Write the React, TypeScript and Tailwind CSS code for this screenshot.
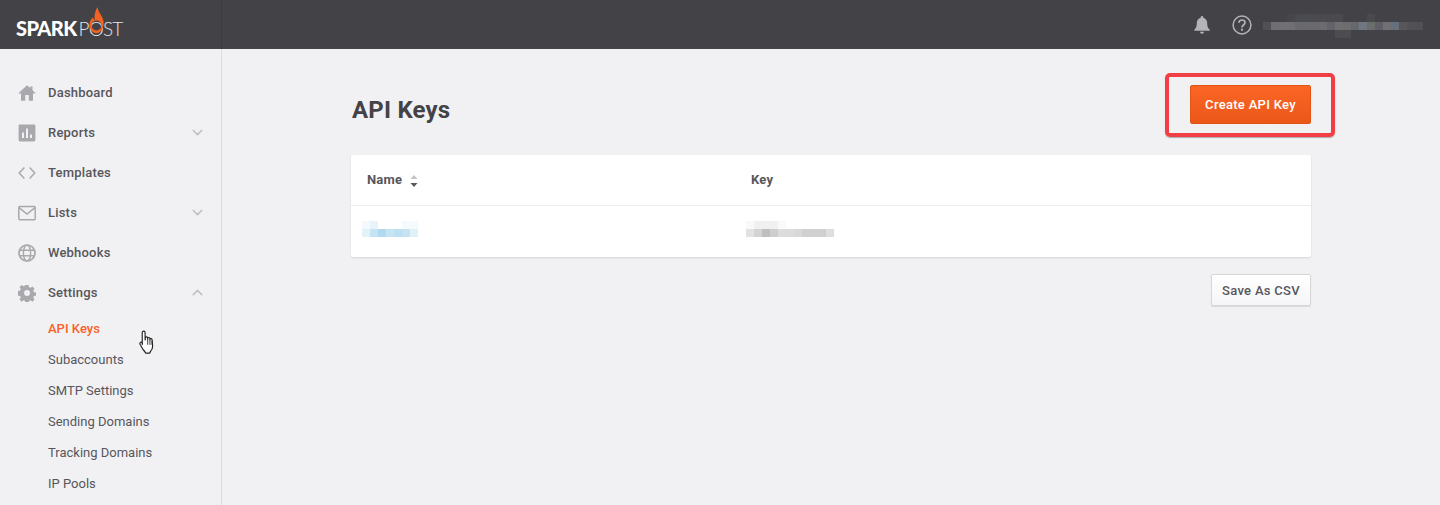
import { ChevronDown, ChevronUp } from 'lucide-react'

const navItems = [
  { label: 'Dashboard', icon: 'home' },
  { label: 'Reports', icon: 'chart', chevron: 'down' },
  { label: 'Templates', icon: 'code' },
  { label: 'Lists', icon: 'mail', chevron: 'down' },
  { label: 'Webhooks', icon: 'globe' },
  { label: 'Settings', icon: 'gear', chevron: 'up' },
]

const subItems = ['API Keys', 'Subaccounts', 'SMTP Settings', 'Sending Domains', 'Tracking Domains', 'IP Pools']

const userTop = ['', '', '', '#47464b', '#4a4b50', '#4b4c51', '#4a4a4f', '#4b4a4f', '#4b4a4f', '#4a494e', '', '', '', '#4a494e', '', '', '', '', '', '']
const userMid = ['#505056', '#6f6e72', '#717074', '#707074', '#69686c', '#6a6a6e', '#6a6a6e', '#6c6b70', '#62636b', '#6f6e70', '#6d6d70', '#64696f', '#717780', '#6c6c6e', '#5d5e66', '#717074', '#66707b', '#56565b', '#515156', '#505055']
const userBottom = ['', '', '', '', '', '', '', '', '', '#4d4c51', '#4d4c51', '', '', '', '', '', '', '', '', '']

const nameTop = ['#f3f9fc', '#e8f4fa', '', '', '', '#f5fafd', '#f5fafd']
const nameBottom = ['#e3f1f9', '#c5e3f2', '#afdaf0', '#c6e4f2', '#bddff1', '#c5e3f2', '#e0f0f8']
const keyTop = ['#f9f9f9', '#f0f0f0', '#f0f0f0', '#f0f0f0', '#fafafa', '', '', '', '', '', '']
const keyBottom = ['#e2e2e2', '#d3d3d3', '#c0bebe', '#cdcdcd', '#dcdcdc', '#dcdcdc', '#d8d8d8', '#d0d0d0', '#d0d0d0', '#d0d0d0', '#dcdedf']

function Mosaic({ rows }: { rows: string[][] }) {
  return (
    <div className="flex flex-col">
      {rows.map((row, i) => (
        <div key={i} className="flex">
          {row.map((color, j) => (
            <div key={j} className="h-2 w-2" style={{ backgroundColor: color || 'transparent' }} />
          ))}
        </div>
      ))}
    </div>
  )
}

function NavIcon({ name }: { name: string }) {
  const c = 'h-[18px] w-[18px] text-[#a9a9ad]'
  if (name === 'home')
    return (
      <svg viewBox="0 0 18 18" className={c} fill="currentColor">
        <path d="M9 1.200 0.200 9.400h2.800v7.400h4.200V11h3.600v5.800h4.200V9.400h2.800L14.500 6.100V2.400h-2.200v1.700z" />
      </svg>
    )
  if (name === 'chart')
    return (
      <svg viewBox="0 0 18 18" className={c} fill="currentColor">
        <path fillRule="evenodd" d="M2 0.600h14a1.400 1.400 0 0 1 1.400 1.400v14a1.400 1.400 0 0 1-1.400 1.400H2A1.400 1.400 0 0 1 .6 16V2A1.400 1.400 0 0 1 2 .6zM4 8.500v5.500h2V8.500zM8 4.500v9.500h2V4.500zM12 10.500v3.500h2v-3.500z" />
      </svg>
    )
  if (name === 'code')
    return (
      <svg viewBox="0 0 18 18" className={c} fill="none" stroke="currentColor" strokeWidth="1.5">
        <path d="M6.400 3.600 1.200 9l5.200 5.400M11.600 3.600 16.800 9l-5.200 5.400" />
      </svg>
    )
  if (name === 'mail')
    return (
      <svg viewBox="0 0 18 18" className={c} fill="none" stroke="currentColor" strokeWidth="1.5">
        <rect x="0.800" y="2.400" width="16.400" height="13.400" rx="1" />
        <path d="M1 3.600 9 10l8-6.400" />
      </svg>
    )
  if (name === 'globe')
    return (
      <svg viewBox="0 0 18 18" className={c} fill="none" stroke="currentColor" strokeWidth="1.4">
        <circle cx="9" cy="9" r="8" strokeWidth="1.700" />
        <ellipse cx="9" cy="9" rx="3.600" ry="8" />
        <path d="M1.400 6.200h15.200M1.400 11.800h15.200" />
      </svg>
    )
  return (
    <svg viewBox="0 0 18 18" className={c} fill="currentColor">
      <path fillRule="evenodd" d="M7.400 0.400h3.200l.5 2.400 1.500.7 2.100-1.300 2.200 2.200-1.300 2.100.7 1.600 2.400.5v3.100l-2.400.5-.7 1.600 1.300 2-2.200 2.300-2.100-1.400-1.500.7-.5 2.400H7.400l-.5-2.400-1.500-.7-2.100 1.400-2.200-2.300 1.300-2-.7-1.600-2.400-.5V6.900l2.400-.5.7-1.600L1.100 2.700l2.200-2.200 2.100 1.300 1.500-.7zM9 5.900A3.100 3.100 0 1 0 9 12.100 3.100 3.100 0 1 0 9 5.900z" transform="translate(0.500 0.500) scale(0.95)" />
    </svg>
  )
}

function Logo() {
  return (
    <div className="relative flex items-baseline font-['Lato',sans-serif] text-[20px] leading-none text-white">
      <span className="font-black tracking-[-0.6px]">SPARK</span>
      <span className="ml-[2px] text-[19px] font-light tracking-[-0.8px] text-[#e4e4e6]">POST</span>
      <svg viewBox="0 0 16 28" className="absolute left-[73px] top-[-12px] h-[28px] w-[15px]">
        <path
          fill="#f26322"
          fillRule="evenodd"
          d="M9 0c.6 3.400 1.500 5 3.400 8 2 3.100 3.400 6 3.200 10.200C15.400 23.600 12 28 8 28S.4 24 .4 19.400c0-4 2-6.400 3.800-8.400.3 1.500.8 2.500 1.800 3.400C5.500 9 6.500 4 9 0zM8 14.500a5.300 5.300 0 1 0 0 10.600 5.300 5.300 0 1 0 0-10.600z"
        />
      </svg>
    </div>
  )
}

function HandCursor() {
  return (
    <svg viewBox="0 0 18 26" className="absolute left-[91px] top-[17px] h-[25px] w-[18px]">
      <path
        fill="#fff"
        stroke="#222"
        strokeWidth="1.200"
        strokeLinejoin="round"
        d="M4.500 1.200c1 0 1.500.7 1.500 1.700v7.400l.4-2.700c.9-.8 2-.5 2.300.5v2.200-2c.8-.8 2-.6 2.300.4v2 -1.400c.8-.7 2-.4 2.200.5l.6 7c0 2.500-1 4-2 5.200-.5.700-.8 1.300-1 2H6.500c-.4-1.300-1.400-2.300-2.500-3.500L1 15.300c-.7-1-.6-2 .2-2.400.7-.4 1.500-.1 2 .7L3 15V2.900c0-1 .6-1.700 1.500-1.700z"
      />
      <path stroke="#222" strokeWidth="0.9" d="M8.700 10.800v4.500M11 11v4.500M13.200 11.200v4.300" />
    </svg>
  )
}

export default function App() {
  return (
    <div className="flex h-[505px] flex-col overflow-hidden bg-[#f1f1f3] font-['Roboto',sans-serif] text-[#57565b]">
      <header className="flex h-[49px] shrink-0 items-center bg-[#434247]">
        <div className="flex h-full w-[222px] items-center border-r border-[#3b3a3f] pl-4 pt-[7px]">
          <Logo />
        </div>
        <div className="flex flex-1 items-center justify-end pr-[17px]">
          <svg viewBox="0 0 16 18" className="mr-[22px] h-[18px] w-[16px] text-[#b4b4b7]" fill="currentColor">
            <path d="M8 0a1.300 1.300 0 0 1 1.300 1.300v.5c2.500.6 3.900 2.700 3.900 5.400 0 3.300.8 5 2.500 6.500v1H.3v-1c1.700-1.500 2.500-3.200 2.500-6.500 0-2.700 1.400-4.800 3.900-5.400v-.5A1.300 1.300 0 0 1 8 0zM6 15.800h4a2 2 0 0 1-4 0z" />
          </svg>
          <svg viewBox="0 0 20 20" className="mr-[11px] h-5 w-5 text-[#b4b4b7]" fill="none" stroke="currentColor">
            <circle cx="10" cy="10" r="8.900" strokeWidth="1.500" />
            <path strokeWidth="1.700" d="M7 7.800C7 6 8.300 5 10 5s3 1 3 2.600c0 2.400-3 2.400-3 4.900" />
            <rect x="9" y="13.700" width="2" height="2" fill="currentColor" stroke="none" />
          </svg>
          <div className="mt-[3px]">
            <Mosaic rows={[userTop, userMid, userBottom]} />
          </div>
        </div>
      </header>

      <div className="flex min-h-0 flex-1">
        <aside className="w-[222px] shrink-0 border-r border-[#dcdce0] pl-[18px] pr-[15px] pt-6">
          {navItems.map((item) => (
            <div key={item.label} className="flex h-10 items-center text-[13px] font-medium tracking-[0.2px]">
              <NavIcon name={item.icon} />
              <span className="ml-3">{item.label}</span>
              {item.chevron === 'down' && <ChevronDown className="ml-auto h-[17px] w-[17px] -translate-y-px text-[#c0c0c4]" strokeWidth={2} />}
              {item.chevron === 'up' && <ChevronUp className="ml-auto h-[17px] w-[17px] -translate-y-px text-[#c0c0c4]" strokeWidth={2} />}
            </div>
          ))}
          <div className="pl-[30px] text-[13px]">
            {subItems.map((label, i) => (
              <div key={label} className={i === 0 ? 'relative flex h-[31px] items-center font-medium text-[#f9622a]' : 'flex h-[31px] items-center'}>
                <span>{label}</span>
                {i === 0 && <HandCursor />}
              </div>
            ))}
          </div>
        </aside>

        <main className="flex-1 pl-[129px] pt-9">
          <div className="w-[960px]">
            <div className="flex h-[70px] items-start justify-between">
              <h1 className="ml-px mt-[9px] text-[24px] font-bold leading-[32px] tracking-[0.2px] text-[#434247]">API Keys</h1>
              <div className="relative">
                <button className="h-[39px] w-[121px] rounded-[2px] border border-[#e2540f] bg-gradient-to-b from-[#fb6626] to-[#eb5719] text-[13px] font-medium tracking-[0.3px] text-white">
                  Create API Key
                </button>
                <div className="absolute -bottom-[13px] -left-[25px] -right-[24px] -top-[12px] rounded-[5px] border-[4px] border-[#f04045] shadow-[0_1px_1px_rgba(0,0,0,0.3)]" />
              </div>
            </div>

            <div className="rounded-[2px] bg-white shadow-[0_1px_2px_rgba(0,0,0,0.12)]">
              <div className="flex h-[51px] items-center border-b border-[#eeeeef] pl-4 text-[13px] font-bold tracking-[0.2px]">
                <div className="flex w-[384px] items-center">
                  <span>Name</span>
                  <svg viewBox="0 0 8 14" className="ml-[8px] mt-[2px] h-[14px] w-2">
                    <path d="M4 1 7.500 5H.5z" fill="#c4c4c6" />
                    <path d="M.5 9h7L4 13z" fill="#57565b" />
                  </svg>
                </div>
                <span>Key</span>
              </div>
              <div className="flex h-[51px] items-start pl-[11px] pt-[15px]">
                <div className="w-[384px]">
                  <Mosaic rows={[nameTop, nameBottom]} />
                </div>
                <Mosaic rows={[keyTop, keyBottom]} />
              </div>
            </div>

            <div className="mt-[17px] flex justify-end">
              <button className="h-[32px] w-[100px] rounded-[2px] border border-[#d6d6d9] bg-gradient-to-b from-white to-[#f5f5f7] pt-px text-[13px] font-medium tracking-[0.3px] shadow-[0_1px_1px_rgba(0,0,0,0.1)]">
                Save As CSV
              </button>
            </div>
          </div>
        </main>
      </div>
    </div>
  )
}
